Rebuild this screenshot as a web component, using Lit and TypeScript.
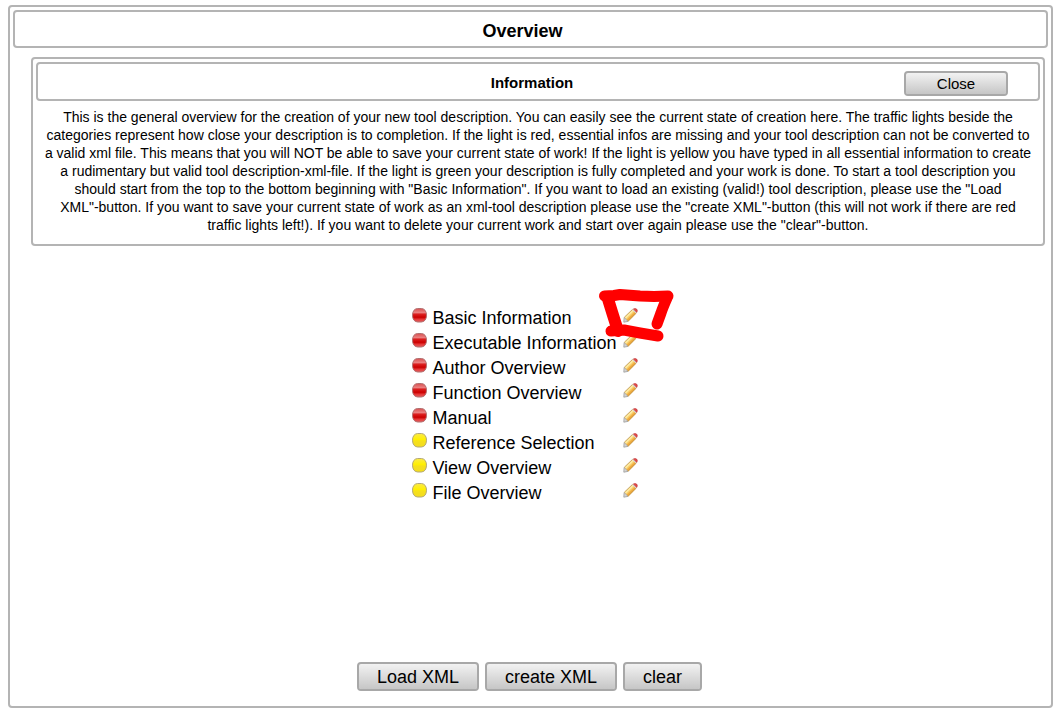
import { LitElement, html, css, svg } from "lit";
import { customElement, property, state } from "lit/decorators.js";

type Light = "red" | "yellow";

interface Category {
  name: string;
  light: Light;
}

const CATEGORIES: Category[] = [
  { name: "Basic Information", light: "red" },
  { name: "Executable Information", light: "red" },
  { name: "Author Overview", light: "red" },
  { name: "Function Overview", light: "red" },
  { name: "Manual", light: "red" },
  { name: "Reference Selection", light: "yellow" },
  { name: "View Overview", light: "yellow" },
  { name: "File Overview", light: "yellow" },
];

@customElement("traffic-light")
export class TrafficLight extends LitElement {
  @property() light: Light = "red";

  static styles = css`
    :host {
      display: block;
      width: 16px;
      height: 16px;
    }
    .icon {
      display: block;
    }
  `;

  render() {
    const red = svg`
      <defs>
        <linearGradient id="r" x1="0" y1="0" x2="0" y2="1">
          <stop offset="0" stop-color="#d85050" />
          <stop offset="0.3" stop-color="#ea8080" />
          <stop offset="0.42" stop-color="#dc2020" />
          <stop offset="0.65" stop-color="#cc0000" />
          <stop offset="0.82" stop-color="#e63c3c" />
          <stop offset="1" stop-color="#e06060" />
        </linearGradient>
      </defs>
      <path d="M5.5 0.5 H9.5 C12.8 0.8 14.5 3.5 14.5 7.2 C14.5 11 12.8 13.7 9.5 14 H5.5 C2.2 13.7 0.5 11 0.5 7.2 C0.5 3.5 2.2 0.8 5.5 0.5 Z" fill="url(#r)" stroke="#b07070" />`;
    const yellow = svg`
      <defs>
        <linearGradient id="y" x1="0" y1="0" x2="0" y2="1">
          <stop offset="0" stop-color="#fbe94a" />
          <stop offset="0.45" stop-color="#fff000" />
          <stop offset="0.55" stop-color="#f6e01a" />
          <stop offset="1" stop-color="#f2dc20" />
        </linearGradient>
      </defs>
      <path d="M5.5 0.5 H9.5 C12.8 0.8 14.5 3.5 14.5 7.2 C14.5 11 12.8 13.7 9.5 14 H5.5 C2.2 13.7 0.5 11 0.5 7.2 C0.5 3.5 2.2 0.8 5.5 0.5 Z" fill="url(#y)" stroke="#b3a878" />`;
    return html`<svg class="icon" width="16" height="16" viewBox="0 0 16 16" aria-hidden="true">
      ${this.light === "red" ? red : yellow}
    </svg>`;
  }
}

@customElement("app-root")
export class AppRoot extends LitElement {
  @state() private showInfo = true;

  static styles = css`
    :host {
      display: block;
      box-sizing: border-box;
      min-height: 100vh;
      padding: 5px 4px 6px 8px;
      background: #fff;
      color: #000;
      font-family: "Liberation Sans", Arial, sans-serif;
      font-size: 18px;
    }
    * {
      box-sizing: border-box;
    }
    .frame {
      border: 2px solid #b4b4b4;
      border-radius: 4px;
    }
    .overview {
      display: flex;
      flex-direction: column;
      min-height: calc(100vh - 11px);
      padding: 3px 3px 15px;
    }
    .title {
      margin: 0;
      padding: 8px 16px 4px 0;
      font-size: 18px;
      line-height: 22px;
      font-weight: bold;
      text-align: center;
    }
    .info {
      margin: 9px 3px 0 18px;
      padding: 3px 3px 10px;
    }
    .info-head {
      display: grid;
      grid-template-columns: 1fr auto 1fr;
      align-items: start;
      padding: 7px 30px 3px 18px;
    }
    .info-title {
      grid-column: 2;
      margin: 0;
      font-size: 15px;
      line-height: 24px;
    }
    .info-text {
      margin: 7px 8px 0;
      font-size: 14px;
      line-height: 18px;
      text-align: center;
    }
    .term {
      white-space: nowrap;
    }
    .btn {
      padding: 1px 18px 0;
      border: 2px solid #a8a8a8;
      border-radius: 4px;
      background: linear-gradient(#f2f2f2, #c6c6c6);
      background-clip: padding-box;
      color: #000;
      font: inherit;
      line-height: 24px;
    }
    .close {
      justify-self: end;
      width: 104px;
      padding: 0;
      font-size: 15px;
      line-height: 21px;
    }
    .board {
      position: relative;
      align-self: center;
      margin: 59px 11px 20px 0;
    }
    .list {
      margin: 0;
      padding: 0;
      list-style: none;
    }
    .row {
      display: grid;
      grid-template-columns: 20px 1fr 15px;
      align-items: start;
      height: 25px;
    }
    .name {
      padding: 1px 6px 0 0;
      line-height: 24px;
    }
    .light {
      margin-top: 3px;
    }
    .edit {
      width: 15px;
      height: 15px;
      margin-top: 3px;
      padding: 0;
      border: 0;
      background: none;
    }
    .pencil {
      display: block;
    }
    .marker {
      position: absolute;
      left: 184px;
      top: -18px;
      pointer-events: none;
    }
    .actions {
      display: flex;
      justify-content: center;
      gap: 6px;
      margin-top: auto;
      padding-right: 2px;
    }
  `;

  private pencil() {
    return svg`<svg class="pencil" width="15" height="15" viewBox="0 0 15 15" aria-hidden="true">
      <path d="M1 9.6 L9.4 1.4 L13.2 5.2 L5 13.4 Z" fill="#f8c860" />
      <path d="M1.4 9.2 L9.4 1.4 L11 3 L3 10.8 Z" fill="#fdeaa0" />
      <path d="M3.6 12 L11.9 3.9 L13.2 5.2 L5 13.4 Z" fill="#eda83c" />
      <path d="M1.1 9.5 L5 13.4 L0.8 14.2 Z" fill="#d4d4d4" stroke="#a0a0a0" stroke-width="0.8" />
      <path d="M9.2 1.8 L10.4 0.8 L13.9 4.3 L12.9 5.4 Z" fill="#d5d2d2" />
      <path d="M10.4 1 Q12 -0.2 13.6 1 Q15 2.6 13.8 4.4 Z" fill="#e24a4a" stroke="#c03838" stroke-width="0.6" />
      <path d="M1.4 9.2 L9.6 1.3 M5.2 13.2 L13.4 5" fill="none" stroke="#b08a4a" stroke-width="0.7" />
    </svg>`;
  }

  render() {
    return html`
      <main class="overview frame">
        <h1 class="title frame">Overview</h1>
        ${this.showInfo
          ? html`<section class="info frame">
              <div class="info-head frame">
                <h2 class="info-title">Information</h2>
                <button class="btn close" @click=${() => (this.showInfo = false)}>Close</button>
              </div>
              <p class="info-text">
                This is the general overview for the creation of your new tool description. You can
                easily see the current state of creation here. The traffic lights beside the
                categories represent how close your description is to completion. If the light is
                red, essential infos are missing and your tool description can not be converted to a
                valid xml file. This means that you will NOT be able to save your current state of
                work! If the light is yellow you have typed in all essential information to create a
                rudimentary but valid tool description-xml-file. If the light is green your
                description is fully completed and your work is done. To start a tool description
                you should start from the top to the bottom beginning with "Basic Information". If
                you want to load an existing (valid!) tool description, please use the "Load
                <span class="term">XML"-button.</span> If you want to save your current state of
                work as an xml-tool description please use the "create XML"-button (this will not
                work if there are red traffic lights left!). If you want to delete your current work
                and start over again please use the "clear"-button.
              </p>
            </section>`
          : null}
        <div class="board">
          <ul class="list">
            ${CATEGORIES.map(
              (c) => html`<li class="row">
                <traffic-light class="light" .light=${c.light}></traffic-light>
                <span class="name">${c.name}</span>
                <button class="edit" aria-label="Edit ${c.name}">${this.pencil()}</button>
              </li>`
            )}
          </ul>
          <svg class="marker" width="80" height="58" viewBox="0 0 80 58" aria-hidden="true">
            <g fill="none" stroke="#f00" stroke-width="11" stroke-linecap="round" stroke-linejoin="round">
              <path d="M8.5 9 L18 8.5 L24 7.5 L44 9 L58 9.5 L72 9" />
              <path d="M12 12 L16 25 L22 44" stroke-width="12" />
              <path d="M71 11 Q67 20 65 26 L61 37" />
              <path d="M15 44 L28 43 L44 46 L62 49" />
            </g>
          </svg>
        </div>
        <div class="actions">
          <button class="btn">Load XML</button>
          <button class="btn">create XML</button>
          <button class="btn">clear</button>
        </div>
      </main>
    `;
  }
}
